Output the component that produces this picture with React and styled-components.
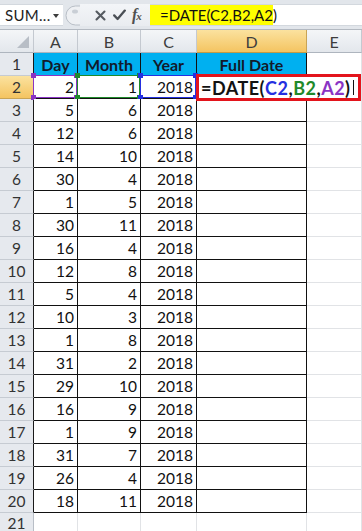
import React from "react";
import styled, { createGlobalStyle, css } from "styled-components";

const Global = createGlobalStyle`
  html, body { margin: 0; padding: 0; background: #ffffff; overflow: hidden; }
  body { font-family: Lato, "Noto Sans", sans-serif; }
  * { box-sizing: border-box; }
`;

const Page = styled.div`
  width: 362px;
  height: 531px;
  overflow: hidden;
  background: #ffffff;
`;

/* ---------- formula bar ---------- */
const FormulaBar = styled.div`
  display: flex;
  height: 29px;
  padding: 4px 0 3px;
  background: #e2e6eb;
`;

const NameBox = styled.div`
  width: 63px;
  display: flex;
  align-items: center;
  justify-content: space-between;
  padding: 0 4px 0 5px;
  background: #ffffff;
  border-top: 1px solid #d3d8de;
  border-bottom: 1px solid #d3d8de;
  font-size: 15px;
  color: #1e1e1e;
  letter-spacing: 0.3px;
`;

const Caret = styled.span`
  width: 0;
  height: 0;
  border-left: 3.5px solid transparent;
  border-right: 3.5px solid transparent;
  border-top: 4px solid #3c3c3c;
  margin-top: 1px;
`;

const Splitter = styled.div`
  width: 17px;
  display: flex;
  align-items: center;
  justify-content: flex-end;
`;

const Tools = styled.div`
  width: 70px;
  display: flex;
  align-items: center;
  padding-left: 11px;
  background: linear-gradient(#f3f5f8, #e9ecf0);
`;

const ToolIcon = styled.span`
  width: 19px;
  display: flex;
  align-items: center;
  justify-content: center;
`;

const Fx = styled.span`
  font-family: "Liberation Serif", "DejaVu Serif", serif;
  font-style: italic;
  font-weight: bold;
  font-size: 16px;
  color: #505050;
  margin-left: 3px;
  letter-spacing: -1px;
  small { font-size: 11px; }
`;

const FormulaInput = styled.div`
  flex: 1;
  display: flex;
  background: #ffffff;
  border-top: 1px solid #d3d8de;
  border-bottom: 1px solid #d3d8de;
`;

const Highlight = styled.div`
  width: 123px;
  display: flex;
  align-items: center;
  padding-left: 10px;
  background: #ffff00;
  font-size: 15px;
  color: #111;
`;

/* ---------- sheet ---------- */
const Sheet = styled.div`
  display: grid;
  grid-template-columns: 34px 44px 63px 56px 110px 1fr;
  grid-auto-rows: 23px;
  border-top: 1px solid #b3b9c1;
`;

const headerBg = css`
  background: linear-gradient(#f4f6f8, #e3e7ec);
`;
const selectedBg = css`
  background: linear-gradient(#fbe29f, #f4c461);
`;

const Corner = styled.div`
  ${headerBg};
  border-right: 1px solid #c4c9d0;
  border-bottom: 1px solid #aeb5be;
  display: flex;
  align-items: flex-end;
  justify-content: flex-end;
  padding: 0 4px 4px 0;
`;

const CornerTriangle = styled.div`
  width: 12px;
  height: 12px;
  background: #b8bec6;
  clip-path: polygon(100% 0, 100% 100%, 0 100%);
`;

const ColHeader = styled.div`
  ${(p) => (p.$selected ? selectedBg : headerBg)};
  border-right: 1px solid ${(p) => (p.$selected ? "#c9a455" : "#c4c9d0")};
  border-bottom: 1px solid ${(p) => (p.$selected ? "#c39a45" : "#aeb5be")};
  display: flex;
  align-items: center;
  justify-content: center;
  font-size: 16px;
  color: #3d3d3d;
`;

const RowHeader = styled.div`
  ${(p) => (p.$selected ? selectedBg : css`background: #e6e9ee;`)};
  border-right: 1px solid ${(p) => (p.$edge ? "#1a1a1a" : "#b8bec6")};
  border-bottom: 1px solid ${(p) => (p.$selected ? "#c9a455" : "#c6cbd2")};
  display: flex;
  align-items: ${(p) => (p.$last ? "flex-start" : "center")};
  padding-top: ${(p) => (p.$last ? 1 : 0)}px;
  justify-content: center;
  font-size: 15.5px;
  color: #333;
`;

const Cell = styled.div`
  position: relative;
  display: flex;
  align-items: center;
  justify-content: ${(p) => (p.$center ? "center" : "flex-end")};
  padding-right: ${(p) => (p.$center ? 0 : 3)}px;
  font-size: ${(p) => (p.$bold ? 16 : 15.5)}px;
  font-weight: ${(p) => (p.$bold ? 700 : 400)};
  color: ${(p) => (p.$bold ? "#121a2b" : "#111")};
  background: ${(p) => (p.$fill ? "#00b0f0" : "#ffffff")};
  border-right: 1px solid ${(p) => (p.$boxed ? "#111" : "#e1e3e6")};
  border-bottom: 1px solid ${(p) => (p.$boxed ? "#111" : "#e1e3e6")};
`;

const RefBox = styled.div`
  position: absolute;
  top: -1px;
  left: -1px;
  right: 0;
  bottom: 0;
  border: 1px solid ${(p) => p.$color};
  pointer-events: none;
`;

const Handle = styled.span`
  position: absolute;
  width: 5px;
  height: 5px;
  background: ${(p) => p.$color};
  ${(p) => (p.$top ? "top: -3px;" : "bottom: -3px;")}
  ${(p) => (p.$left ? "left: -3px;" : "right: -3px;")}
`;

const EditBox = styled.div`
  position: absolute;
  z-index: 3;
  top: -2px;
  left: -1px;
  width: 165px;
  height: 27px;
  border: 3px solid #e3141c;
  background: #ffffff;
  display: flex;
  align-items: center;
  padding-left: 2px;
  font-size: 18px;
  font-weight: 700;
  color: #121212;
  white-space: nowrap;
  letter-spacing: 0.5px;
`;

const Ref = styled.span`
  color: ${(p) => p.$color};
`;

const TextCursor = styled.span`
  display: inline-block;
  width: 1px;
  height: 15px;
  background: #111;
  margin-left: 2px;
`;

const REF = { A: "#8a34c4", B: "#1f8a2a", C: "#2430e0" };

const data = [
  [2, 1], [5, 6], [12, 6], [14, 10], [30, 4], [1, 5], [30, 11], [16, 4],
  [12, 8], [5, 4], [10, 3], [1, 8], [31, 2], [29, 10], [16, 9], [1, 9],
  [31, 7], [26, 4], [18, 11],
];

function Handles({ color }) {
  return (
    <>
      <Handle $color={color} $top $left />
      <Handle $color={color} $top />
      <Handle $color={color} $left />
      <Handle $color={color} />
    </>
  );
}

function RefCell({ color, children }) {
  return (
    <Cell $boxed>
      {children}
      <RefBox $color={color}>
        <Handles color={color} />
      </RefBox>
    </Cell>
  );
}

export default function App() {
  return (
    <Page>
      <Global />
      <FormulaBar>
        <NameBox>
          SUM...
          <Caret />
        </NameBox>
        <Splitter>
          <svg width="15" height="21" viewBox="0 0 15 21">
            <path d="M15 1 H10.5 A9.5 9.5 0 0 0 10.5 20 H15" fill="#eef0f3" stroke="#b9bfc7" strokeWidth="1" />
            <ellipse cx="10" cy="6.5" rx="3" ry="2" fill="#c9ced5" />
          </svg>
        </Splitter>
        <Tools>
          <ToolIcon>
            <svg width="11" height="11" viewBox="0 0 11 11">
              <path d="M1.5 1.5 L9.5 9.5 M9.5 1.5 L1.5 9.5" stroke="#555a60" strokeWidth="2.1" strokeLinecap="round" />
            </svg>
          </ToolIcon>
          <ToolIcon>
            <svg width="13" height="12" viewBox="0 0 13 12">
              <path d="M1.2 6.4 L4.6 10 L11.8 1.6" fill="none" stroke="#4a4f55" strokeWidth="2.3" strokeLinecap="round" strokeLinejoin="round" />
            </svg>
          </ToolIcon>
          <Fx>
            f<small>x</small>
          </Fx>
        </Tools>
        <FormulaInput>
          <Highlight>=DATE(C2,B2,A2)</Highlight>
        </FormulaInput>
      </FormulaBar>

      <Sheet>
        <Corner>
          <CornerTriangle />
        </Corner>
        <ColHeader>A</ColHeader>
        <ColHeader>B</ColHeader>
        <ColHeader>C</ColHeader>
        <ColHeader $selected>D</ColHeader>
        <ColHeader>E</ColHeader>

        <RowHeader $edge>1</RowHeader>
        <Cell $boxed $fill $bold $center>Day</Cell>
        <Cell $boxed $fill $bold $center>Month</Cell>
        <Cell $boxed $fill $bold $center>Year</Cell>
        <Cell $boxed $fill $bold $center>Full Date</Cell>
        <Cell />

        {data.map(([day, month], i) => {
          const row = i + 2;
          if (row === 2) {
            return (
              <React.Fragment key={row}>
                <RowHeader $edge $selected>2</RowHeader>
                <RefCell color={REF.A}>{day}</RefCell>
                <RefCell color={REF.B}>{month}</RefCell>
                <RefCell color={REF.C}>2018</RefCell>
                <Cell $boxed>
                  <EditBox>
                    =DATE(<Ref $color={REF.C}>C2</Ref>,<Ref $color={REF.B}>B2</Ref>,<Ref $color={REF.A}>A2</Ref>)
                    <TextCursor />
                  </EditBox>
                </Cell>
                <Cell />
              </React.Fragment>
            );
          }
          return (
            <React.Fragment key={row}>
              <RowHeader $edge>{row}</RowHeader>
              <Cell $boxed>{day}</Cell>
              <Cell $boxed>{month}</Cell>
              <Cell $boxed>2018</Cell>
              <Cell $boxed />
              <Cell />
            </React.Fragment>
          );
        })}

        <RowHeader $last>21</RowHeader>
        <Cell />
        <Cell />
        <Cell />
        <Cell />
        <Cell />
      </Sheet>
    </Page>
  );
}
